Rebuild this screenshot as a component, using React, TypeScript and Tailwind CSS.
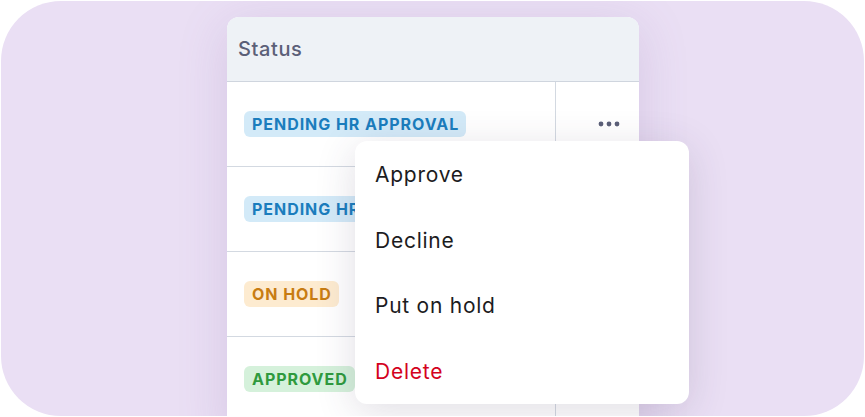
const ROWS = [
  { label: 'PENDING HR APPROVAL', tone: 'bg-[#d3eaf8] text-[#1b7dbd]' },
  { label: 'PENDING HR APPROVAL', tone: 'bg-[#d3eaf8] text-[#1b7dbd]' },
  { label: 'ON HOLD', tone: 'bg-[#fdebd0] text-[#c87c12]' },
  { label: 'APPROVED', tone: 'bg-[#d5f1db] text-[#2f9a3e]' },
]

const ACTIONS = [
  { label: 'Approve', danger: false },
  { label: 'Decline', danger: false },
  { label: 'Put on hold', danger: false },
  { label: 'Delete', danger: true },
]

function Dots() {
  return (
    <svg width="22" height="6" viewBox="0 0 22 6" className="text-[#5b6078]">
      <circle cx="3" cy="3" r="2.4" fill="currentColor" />
      <circle cx="11" cy="3" r="2.4" fill="currentColor" />
      <circle cx="19" cy="3" r="2.4" fill="currentColor" />
    </svg>
  )
}

export default function App() {
  return (
    <div className="w-[865px] h-[417px] bg-white p-px" style={{ fontFamily: 'Inter, "Noto Sans", sans-serif' }}>
      <div className="relative w-full h-full rounded-[60px] bg-[#eadff4] overflow-hidden pl-[226px] pt-4">
        <div className="w-[412px] h-[420px] bg-white rounded-t-[12px] shadow-[0_10px_50px_rgba(120,90,160,0.18)] overflow-hidden">
          <div className="h-[65px] bg-[#eef2f6] border-b-[1.5px] border-[#cfd5de] flex items-center pl-[11px]">
            <span className="text-[20px] font-medium tracking-[0.6px] text-[#5b6078]">Status</span>
          </div>
          {ROWS.map((row, i) => (
            <div key={i} className="flex h-[85px] border-b-[1.5px] border-[#d3d9e1]">
              <div className="w-[329px] border-r-[1.5px] border-[#d3d9e1] flex items-center pl-[17px]">
                <span className={`pl-2 pr-[7px] h-[26px] flex items-center rounded-[6px] text-[16px] font-bold tracking-[0.95px] ${row.tone}`}>
                  {row.label}
                </span>
              </div>
              <div className="flex-1 flex items-center justify-center pl-[23px]">{i === 0 && <Dots />}</div>
            </div>
          ))}
        </div>

        <div className="absolute left-[354px] top-[140px] w-[334px] h-[263px] bg-white rounded-[12px] shadow-[0_8px_40px_rgba(60,50,90,0.16)] py-px">
          {ACTIONS.map((a) => (
            <div
              key={a.label}
              className={`h-[65.5px] flex items-center pl-5 text-[21px] tracking-[0.75px] ${a.danger ? 'text-[#d4021d]' : 'text-[#1c1c1e]'}`}
            >
              {a.label}
            </div>
          ))}
        </div>
      </div>
    </div>
  )
}
